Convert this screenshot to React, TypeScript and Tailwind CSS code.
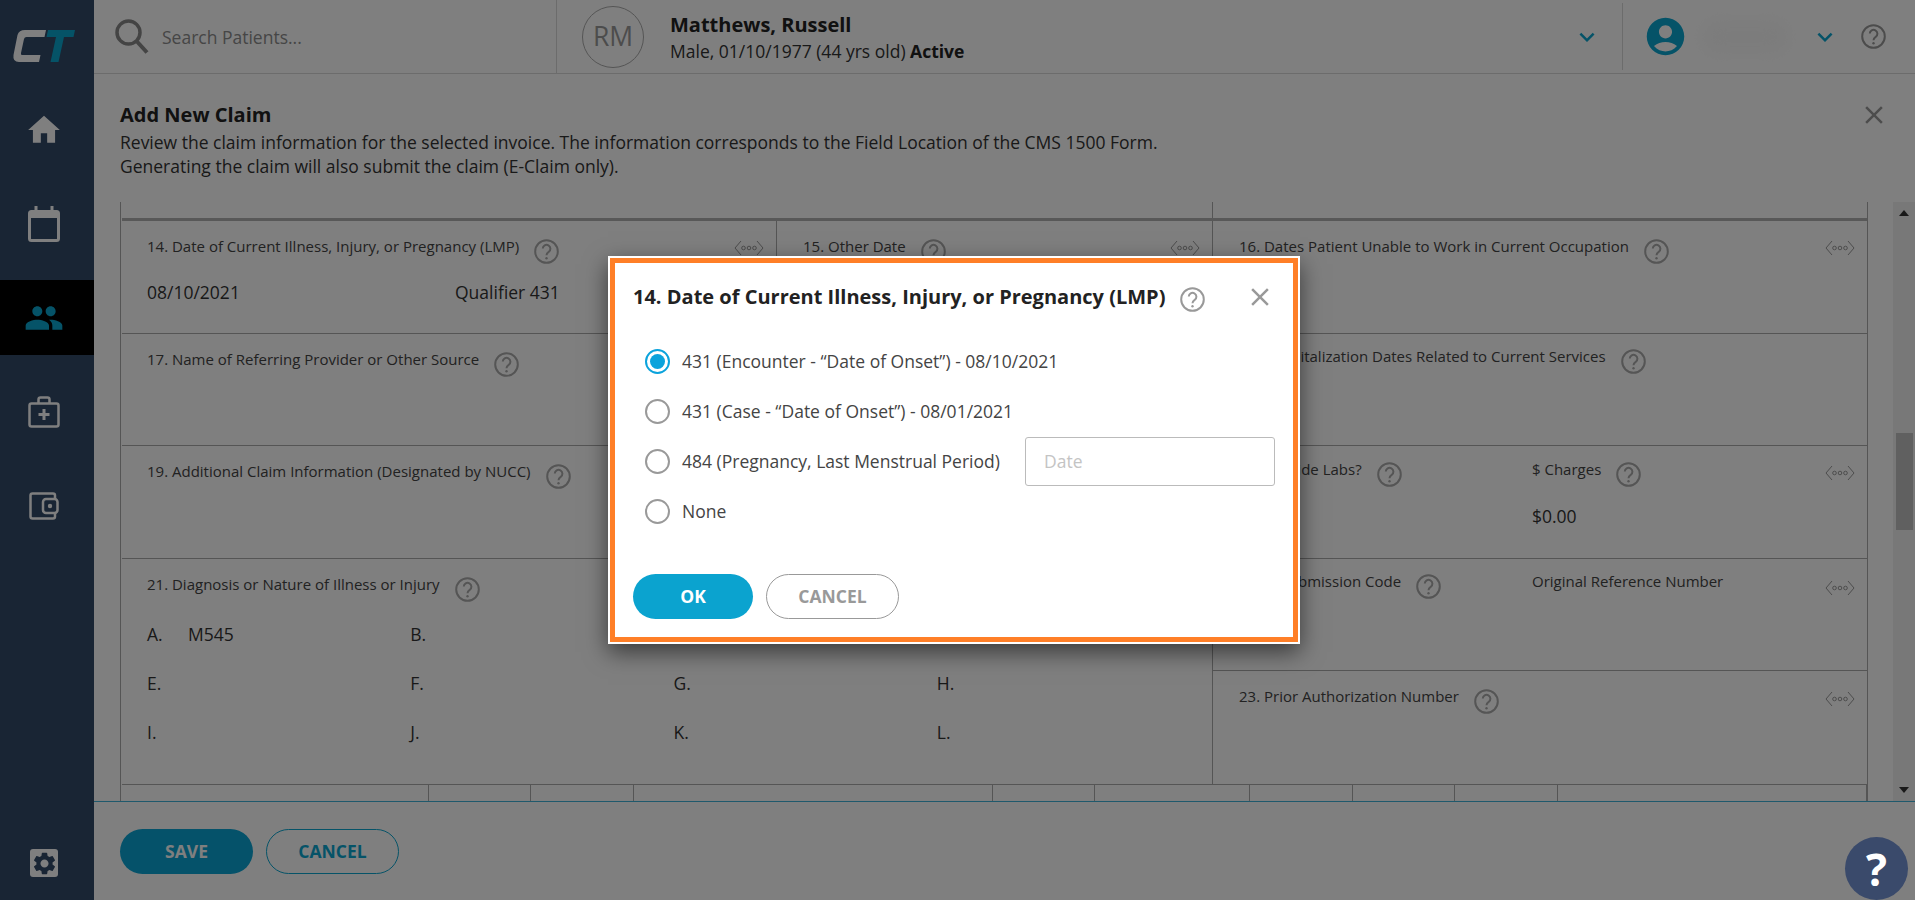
import { MdHome, MdPeople, MdSettings, MdKeyboardArrowDown, MdClose, MdAccountCircle } from "react-icons/md";

function HelpIcon({ className = "" }: { className?: string }) {
  return (
    <svg viewBox="0 0 25 25" className={`h-[25px] w-[25px] shrink-0 ${className}`} fill="none" stroke="currentColor" strokeWidth="2">
      <circle cx="12.5" cy="12.5" r="11.3" />
      <path d="M8.8 9.6a3.8 3.8 0 1 1 5.9 3.2c-1.4.9-2.2 1.7-2.2 3.4" />
      <circle cx="12.5" cy="19.3" r="1.2" fill="currentColor" stroke="none" />
    </svg>
  );
}

function DotsIcon({ className = "" }: { className?: string }) {
  return (
    <svg viewBox="0 0 30 16" className={`h-[16px] w-[30px] shrink-0 text-[#999] ${className}`} fill="none" stroke="currentColor" strokeWidth="1">
      <path d="M7 1 1 8l6 7M23 1l6 7-6 7" />
      <circle cx="9.5" cy="8" r="1.8" />
      <circle cx="15" cy="8" r="1.8" />
      <circle cx="20.5" cy="8" r="1.8" />
    </svg>
  );
}

function Label({ text }: { text: string }) {
  return (
    <div className="flex items-start whitespace-nowrap text-[15px] leading-[18px] text-[#444]">
      <span>{text}</span>
      <HelpIcon className="ml-[15px] mt-[2px] text-[#aaa]" />
    </div>
  );
}

function Cell({ label, dots, className = "" }: { label: string; dots?: string; className?: string }) {
  return (
    <div className={`flex items-start justify-between pl-[26px] pr-[12px] ${className}`}>
      <Label text={label} />
      {dots && <DotsIcon className={dots} />}
    </div>
  );
}

const diagnosis = [
  ["A.", "M545"], ["B.", ""], ["C.", ""], ["D.", ""],
  ["E.", ""], ["F.", ""], ["G.", ""], ["H.", ""],
  ["I.", ""], ["J.", ""], ["K.", ""], ["L.", ""],
];

const bottomCols = ["w-[307px]", "w-[102px]", "w-[103px]", "w-[359px]", "w-[102px]", "w-[155px]", "w-[103px]", "w-[102px]", "w-[103px]", "w-[309px]"];

function Sidebar() {
  return (
    <aside className="flex w-[94px] shrink-0 flex-col bg-[#324a68] pr-[6px] text-white">
      <div className="flex h-[92px] shrink-0 items-center justify-center">
        <svg viewBox="0 0 64 34" className="h-[34px] w-[64px]">
          <path d="M34 1H13Q7 1 5.5 6L1.5 26Q.5 33 7 33h20l1.5-7H10q-1.5 0-1-2l3-14q.5-2 2.500-2h18z" fill="#fff" />
          <path d="M36 1h27l-1.500 7H52l-5.500 25H38.500L44 8h-9.500z" fill="#0aa6cf" />
        </svg>
      </div>
      <nav className="-mr-[6px] flex flex-col gap-[19px] pr-[6px]">
        <div className="flex h-[75px] items-center justify-center"><MdHome size={38} /></div>
        <div className="flex h-[75px] items-center justify-center">
          <svg viewBox="0 0 32 36" className="h-[36px] w-[32px]" fill="none" stroke="currentColor">
            <rect x="1.500" y="5.500" width="29" height="29" rx="2" strokeWidth="3" />
            <path d="M1.500 9.500h29" strokeWidth="5" />
            <path d="M8 0v6M24 0v6" strokeWidth="3" />
          </svg>
        </div>
        <div className="-mr-[6px] flex h-[75px] items-center justify-center bg-black pr-[6px]"><MdPeople size={40} className="text-[#0ba6d0]" /></div>
        <div className="flex h-[75px] items-center justify-center">
          <svg viewBox="0 0 32 32" className="h-[32px] w-[32px]" fill="none" stroke="currentColor" strokeWidth="2.500">
            <rect x="1.500" y="7.500" width="29" height="23" rx="2" />
            <path d="M10.500 7.500V3.500q0-2 2-2h7q2 0 2 2v4" />
            <path d="M16 13v11M10.500 18.500h11" strokeWidth="3" />
          </svg>
        </div>
        <div className="flex h-[75px] items-center justify-center">
          <svg viewBox="0 0 30 28" className="h-[28px] w-[30px]" fill="none" stroke="currentColor" strokeWidth="2.500">
            <path d="M26 7V3.500q0-2-2-2H3.500q-2 0-2 2v21q0 2 2 2H24q2 0 2-2V21" />
            <rect x="14" y="7" width="14.500" height="14" rx="3" />
            <circle cx="21" cy="14" r="2.200" fill="currentColor" stroke="none" />
          </svg>
        </div>
      </nav>
      <div className="mt-auto flex justify-center pb-[23px]">
        <div className="flex h-[28px] w-[28px] items-center justify-center rounded-[3px] bg-white"><MdSettings size={27} className="text-[#324a68]" /></div>
      </div>
    </aside>
  );
}

function Header() {
  return (
    <header className="flex h-[74px] shrink-0 border-b border-[#d8d8d8]">
      <div className="flex w-[463px] items-center border-r border-[#d8d8d8] pl-[21px]">
        <svg viewBox="0 0 34 36" className="h-[36px] w-[34px] text-[#888]" fill="none" stroke="currentColor" strokeWidth="3.500">
          <circle cx="13.500" cy="13.500" r="11.500" />
          <path d="M21.500 22 32 33.500" strokeWidth="4" />
        </svg>
        <span className="ml-[13px] pt-px text-[17.5px] text-[#8c8c8c]">Search Patients...</span>
      </div>
      <div className="flex flex-1 items-center pl-[25px]">
        <div className="flex h-[62px] w-[62px] items-center justify-center rounded-full border border-[#aaa] text-[26.5px] text-[#999]">RM</div>
        <div className="ml-[26px] pt-[2px]">
          <div className="text-[20px] font-bold leading-[26px] text-[#222]">Matthews, Russell</div>
          <div className="text-[17.5px] leading-[26px] text-[#333]">
            Male, 01/10/1977 (44 yrs old) <span className="font-bold text-[#222]">Active</span>
          </div>
        </div>
        <MdKeyboardArrowDown size={30} className="ml-auto mr-[20px] text-[#0ba6d0]" />
      </div>
      <div className="my-[3px] flex w-[293px] shrink-0 items-center border-l border-[#d8d8d8] pl-[20px]">
        <MdAccountCircle size={45} className="text-[#0ba6d0]" />
        <div className="ml-[12px] h-[36px] w-[90px] rounded-full bg-[#f9f9f9] blur-[8px]" />
        <MdKeyboardArrowDown size={30} className="ml-[20px] text-[#0ba6d0]" />
        <HelpIcon className="ml-[21px] text-[#999]" />
      </div>
    </header>
  );
}

function ClaimForm() {
  return (
    <div className="flex min-h-0 flex-1 pl-[26px]">
      <div className="h-[599px] w-[1748px] shrink-0 overflow-hidden border-x border-[#aaa] pl-px">
        <div className="h-[16px] w-[1091px] border-r border-[#aaa]" />
        <div className="border-t-[3px] border-[#b0b0b0]">
          <div className="flex">
            {/* left part of the form */}
            <div className="w-[1091px] shrink-0 border-r border-[#aaa]">
              <div className="flex h-[113px] border-b border-[#aaa]">
                <div className="w-[655px] shrink-0 border-r border-[#aaa] pt-[16px]">
                  <Cell label="14. Date of Current Illness, Injury, or Pregnancy (LMP)" dots="mt-[3px]" className="-ml-px" />
                  <div className="mt-[16px] flex pl-[25px] text-[17.5px] leading-[24px] text-[#333]">
                    <span className="w-[308px]">08/10/2021</span>
                    <span>Qualifier 431</span>
                  </div>
                </div>
                <div className="flex-1 pt-[16px]"><Cell label="15. Other Date" dots="mt-[3px]" /></div>
              </div>
              <div className="h-[112px] border-b border-[#aaa] pt-[16px]"><Cell label="17. Name of Referring Provider or Other Source" className="-ml-px" /></div>
              <div className="h-[113px] border-b border-[#aaa] pt-[16px]"><Cell label="19. Additional Claim Information (Designated by NUCC)" className="-ml-px" /></div>
              <div className="h-[225px] pt-[16px]">
                <Cell label="21. Diagnosis or Nature of Illness or Injury" className="-ml-px" />
                <div className="mt-[20px] grid w-[1078px] grid-cols-4 gap-y-[25px] pl-[25px] text-[17.5px] leading-[24px] text-[#333]">
                  {diagnosis.map(([letter, code]) => (
                    <div key={letter} className="flex">
                      <span className="w-[41px]">{letter}</span>
                      <span>{code}</span>
                    </div>
                  ))}
                </div>
              </div>
            </div>
            {/* right part of the form */}
            <div className="flex-1">
              <div className="h-[113px] border-b border-[#aaa] pt-[16px]"><Cell label="16. Dates Patient Unable to Work in Current Occupation" dots="mt-[3px]" /></div>
              <div className="h-[112px] border-b border-[#aaa] pt-[13px]"><Cell label="18. Hospitalization Dates Related to Current Services" /></div>
              <div className="flex h-[113px] border-b border-[#aaa] pt-[14px]">
                <div className="w-[319px] shrink-0 pl-[26px]"><Label text="20. Outside Labs?" /></div>
                <div className="flex-1">
                  <div className="flex items-start justify-between pr-[12px]">
                    <Label text="$ Charges" />
                    <DotsIcon className="mt-[5px]" />
                  </div>
                  <div className="mt-[17px] text-[17.5px] leading-[24px] text-[#333]">$0.00</div>
                </div>
              </div>
              <div className="flex h-[112px] border-b border-[#aaa] pt-[13px]">
                <div className="w-[319px] shrink-0 pl-[26px]"><Label text="22. Resubmission Code" /></div>
                <div className="flex flex-1 items-start justify-between pr-[12px]">
                  <span className="text-[15px] leading-[18px] text-[#444]">Original Reference Number</span>
                  <DotsIcon className="mt-[8px]" />
                </div>
              </div>
              <div className="h-[112px] pt-[16px]"><Cell label="23. Prior Authorization Number" dots="mt-[4px]" /></div>
            </div>
          </div>
          <div className="flex h-[18px] border-t border-[#aaa]">
            {bottomCols.map((w, i) => (
              <div key={i} className={`${w} shrink-0 border-r border-[#aaa]`} />
            ))}
          </div>
        </div>
      </div>
      <div className="ml-[25px] flex w-[22px] shrink-0 flex-col items-center bg-[#f0f0f0] pt-[8px]">
        <svg viewBox="0 0 10 6" className="h-[6px] w-[10px] text-[#333]"><path d="M5 0l5 6H0z" fill="currentColor" /></svg>
        <div className="mt-[217px] h-[97px] w-[17px] bg-[#c0c0c0]" />
        <svg viewBox="0 0 10 6" className="mt-[257px] h-[6px] w-[10px] text-[#333]"><path d="M0 0h10L5 6z" fill="currentColor" /></svg>
      </div>
    </div>
  );
}

function Radio({ checked = false }: { checked?: boolean }) {
  return (
    <span className={`flex h-[25px] w-[25px] shrink-0 items-center justify-center rounded-full border-2 ${checked ? "border-[#0ba3dc]" : "border-[#999]"}`}>
      {checked && <span className="h-[15px] w-[15px] rounded-full bg-[#0ba3dc]" />}
    </span>
  );
}

function ClaimDialog() {
  return (
    <div className="absolute left-[608px] top-[256px] z-20 h-[388px] w-[692px] border-2 border-white bg-white shadow-[0_8px_22px_rgba(0,0,0,0.55)]">
      <div className="h-full border-[5px] border-[#ff7f27] px-[18px] pt-[21px]">
        <div className="flex h-[26px] items-start">
          <h2 className="whitespace-nowrap text-[20px] font-bold leading-[26px] text-[#222]">14. Date of Current Illness, Injury, or Pregnancy (LMP)</h2>
          <HelpIcon className="ml-[15px] mt-[3px] text-[#999]" />
          <MdClose size={30} className="ml-[40px] -mt-[2px] shrink-0 text-[#999]" />
        </div>
        <div className="mt-[26px] pl-[12px] text-[17.5px] text-[#444]">
          <div className="flex h-[50px] items-center gap-[12px]"><Radio checked /><span>431 (Encounter - “Date of Onset”) - 08/10/2021</span></div>
          <div className="flex h-[50px] items-center gap-[12px]"><Radio /><span>431 (Case - “Date of Onset”) - 08/01/2021</span></div>
          <div className="flex h-[50px] items-center gap-[12px]">
            <Radio />
            <span>484 (Pregnancy, Last Menstrual Period)</span>
            <input placeholder="Date" className="ml-auto h-[49px] w-[250px] rounded-[3px] border border-[#bbb] pl-[18px] text-[17.5px] placeholder:text-[#c4c4c4]" />
          </div>
          <div className="flex h-[50px] items-center gap-[12px]"><Radio /><span>None</span></div>
        </div>
        <div className="mt-[38px] flex gap-[13px]">
          <button className="h-[45px] w-[120px] rounded-full bg-[#0ba3cf] text-[17.5px] font-bold text-white">OK</button>
          <button className="h-[45px] w-[133px] rounded-full border border-[#999] text-[17.5px] font-bold text-[#999]">CANCEL</button>
        </div>
      </div>
    </div>
  );
}

export default function App() {
  return (
    <div className="relative flex h-[900px] w-[1915px] overflow-hidden bg-white font-['Open_Sans',sans-serif]">
      <Sidebar />
      <main className="flex min-w-0 flex-1 flex-col">
        <Header />
        <div className="flex h-[128px] shrink-0 items-start justify-between pl-[26px] pr-[26px] pt-[28px]">
          <div>
            <h1 className="text-[20px] font-bold leading-[26px] text-[#222]">Add New Claim</h1>
            <p className="mt-[2px] text-[17.5px] leading-[24px] text-[#333]">
              Review the claim information for the selected invoice. The information corresponds to the Field Location of the CMS 1500 Form.
              <br />
              Generating the claim will also submit the claim (E-Claim only).
            </p>
          </div>
          <MdClose size={30} className="-mt-[2px] text-[#999]" />
        </div>
        <ClaimForm />
        <footer className="flex h-[99px] shrink-0 gap-[13px] border-t border-[#3fb2d8] pl-[26px] pt-[27px]">
          <button className="h-[45px] w-[133px] rounded-full bg-[#0aa4d4] text-[17.5px] font-bold text-white">SAVE</button>
          <button className="h-[45px] w-[133px] rounded-full border border-[#0ba6d0] text-[17.5px] font-bold text-[#0ba6d0]">CANCEL</button>
        </footer>
      </main>
      {/* dimmed backdrop behind the dialog */}
      <div className="absolute inset-0 z-10 bg-black/50" />
      <ClaimDialog />
      <button className="absolute left-[1845px] top-[837px] z-20 flex h-[63px] w-[63px] items-center justify-center rounded-full bg-[#3a4a6b] text-[44px] font-bold leading-none text-white">?</button>
    </div>
  );
}
